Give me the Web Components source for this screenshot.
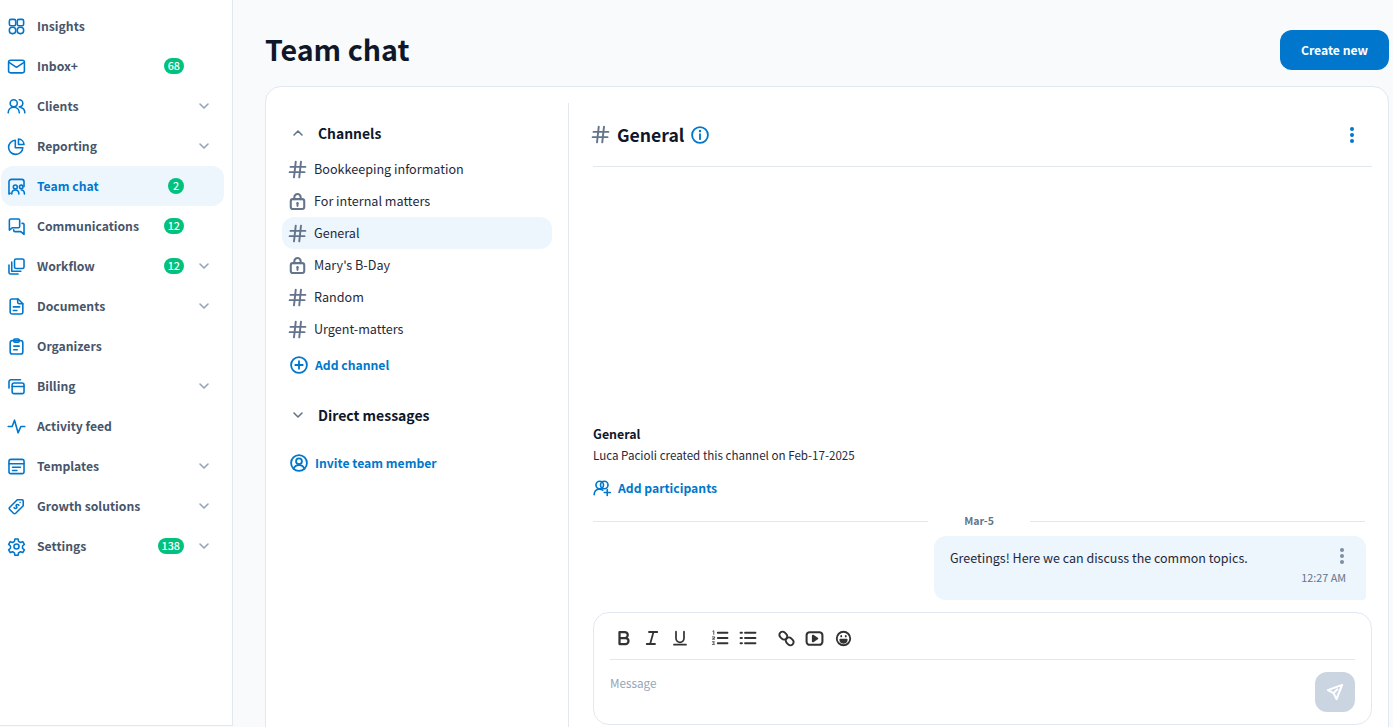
<!DOCTYPE html>
<html lang="en">
<head>
<meta charset="utf-8">
<title>Team chat</title>
<style>
  html, body { margin: 0; height: 100%; overflow: hidden; }
  body { font-family: "Noto Sans CJK SC", "Noto Sans", sans-serif; color: #0f172a; }
</style>
</head>
<body>
<app-shell></app-shell>
<script>
// stroke icons, 24 box unless the caller gives another one
const ICONS = {
  insights: '<rect x="3" y="3" width="8" height="8" rx="2"/><rect x="13" y="3" width="8" height="8" rx="2"/><rect x="3" y="13" width="8" height="8" rx="3.5"/><rect x="13" y="13" width="8" height="8" rx="3.5"/>',
  inbox: '<rect x="2" y="4" width="20" height="16" rx="2.5"/><path d="M3 7l9 6 9-6"/>',
  clients: '<circle cx="8.500" cy="8" r="4.500"/><path d="M1.500 20c0-4 3-7 7-7s7 3 7 7"/><path d="M15.500 3.500a4.500 4.500 0 0 1 0 9M18 13.500c2.800.8 4.500 3.300 4.500 6.500"/>',
  reporting: '<path d="M10.500 4a9 9 0 1 0 9.500 9.500h-9.500z"/><path d="M14.500 2.500a7.500 7.500 0 0 1 7 7h-7z"/>',
  teamchat: '<path d="M4 20.500l-1.500 1V6a3 3 0 0 1 3-3h13a3 3 0 0 1 3 3v6"/><circle cx="10.500" cy="12.500" r="2.500"/><path d="M6 21.500c0-3 2-5 4.500-5s4.500 2 4.500 5"/><circle cx="18" cy="12.500" r="2.200"/><path d="M18 16.500c2.400 0 4 2 4 5"/>',
  comms: '<path d="M3 4a1.500 1.500 0 0 1 1.500-1.500h10A1.500 1.500 0 0 1 16 4v8a1.500 1.500 0 0 1-1.500 1.500H7L3 16.500z"/><path d="M19 8h1a1.500 1.500 0 0 1 1.500 1.500V22l-4-3.500H10a1.500 1.500 0 0 1-1.500-1.500v-1"/>',
  workflow: '<rect x="9.500" y="2.500" width="12" height="12" rx="2"/><path d="M2.500 10v9.500a2 2 0 0 0 2 2H14"/><path d="M6 6.500v11.500h11.500"/>',
  documents: '<path d="M6 2.500h8l6 6V19a2.500 2.500 0 0 1-2.500 2.500h-11A2.500 2.500 0 0 1 4 19V4.500a2 2 0 0 1 2-2z"/><path d="M13.500 2.500v4a2 2 0 0 0 2 2h4.500M8 12.500h8M8 17h4.500"/>',
  organizers: '<rect x="4" y="4.500" width="16" height="17" rx="3"/><rect x="8.500" y="2.500" width="7" height="4" rx="1.500"/><path d="M8.500 11.500h7M8.500 16h4.500"/>',
  billing: '<rect x="6.500" y="7.500" width="15" height="13.500" rx="2.500"/><path d="M6.500 12h15"/><path d="M2.500 14V6a2.500 2.500 0 0 1 2.500-2.500h12"/>',
  activity: '<path d="M1.500 12h5l3-8 4.500 16 3.500-8h5"/>',
  templates: '<rect x="2.500" y="3" width="19" height="18" rx="2.500"/><path d="M2.500 8.500h19M7 13h10M7 17h5.500"/>',
  growth: '<path d="M13 3.500h6a1.500 1.500 0 0 1 1.500 1.500v6L11 20.500a2 2 0 0 1-2.800 0l-4.700-4.700a2 2 0 0 1 0-2.800z"/><path d="M15 10.500c-1-1.500-3-1-3.500 0s1.500 2 1 3-2.500 1.500-3.500 0M16.500 7h.1"/>',
  settings: '<circle cx="12" cy="12" r="3.200"/><path d="M10 2.500h4l.6 3 2.400 1.400 2.900-1 2 3.500-2.300 2v2.800l2.300 2-2 3.500-2.900-1-2.400 1.400-.6 3h-4l-.6-3L7 18.700l-2.900 1-2-3.500 2.300-2v-2.800l-2.300-2 2-3.500 2.900 1 2.400-1.400z" stroke-linejoin="round"/>',
  chevron: '<path d="M6 9l6 6 6-6"/>',
  chevronUp: '<path d="M6 15l6-6 6 6"/>',
  hash: '<path d="M4 9h17M3 15h17M10 3L8 21M16 3l-2 18"/>',
  lock: '<rect x="3.500" y="9" width="17" height="12.500" rx="2.500"/><path d="M8 9V6.500a4 4 0 0 1 8 0V9"/><circle cx="12" cy="14" r="1.500" fill="currentColor" stroke="none"/><path d="M12 14.500v3"/>',
  plusCircle: '<circle cx="12" cy="12" r="9.500"/><path d="M12 7.500v9M7.500 12h9"/>',
  userCircle: '<circle cx="12" cy="12" r="9.500"/><circle cx="12" cy="10" r="3.500"/><path d="M5.500 19c1-3 3.500-4.500 6.500-4.500s5.500 1.500 6.500 4.500"/>',
  info: '<circle cx="12" cy="12" r="9.500"/><path d="M12 11v6"/><path d="M12 7v.5" stroke-width="2.800"/>',
  addPeople: '<circle cx="9" cy="8" r="5"/><circle cx="15" cy="8" r="5"/><path d="M1.500 21c0-4 2.500-7.500 7-7.500 2 0 3.500.6 4.500 1.500"/><path d="M19 14v8M15 18h8"/>',
  send: '<path d="M21.500 2.500L2.500 9.500l7.500 4 4 8z" stroke-linejoin="round"/><path d="M10 13.500l5-5"/>',
  bold: '<path d="M6 4h7a4 4 0 0 1 0 8H6zM6 12h8a4 4 0 0 1 0 8H6z"/>',
  italic: '<path d="M8 4h11M5 20h11M14 4l-4.500 16"/>',
  underline: '<path d="M6 2.500v10a6 6 0 0 0 12 0v-10M3 22h18"/>',
  ol: '<path d="M9 5h13M9 12h13M9 19h13" stroke-width="2.400"/><path d="M2.500 3l1.200-.8v5M1.800 10.500h3v1.500l-3 1.500h3M1.800 17h3l-1.500 1.500 1.500 2h-3" stroke-width="1.100"/>',
  ul: '<path d="M8 5h14M8 12h14M8 19h14M2 5h2M2 12h2M2 19h2" stroke-width="2.400"/>',
  link: '<rect x="1.500" y="3.500" width="12" height="9" rx="4.500" transform="rotate(45 7.500 8)"/><rect x="10.500" y="11.500" width="12" height="9" rx="4.500" transform="rotate(45 16.500 16)"/>',
  video: '<rect x="2" y="4" width="20" height="16" rx="4"/><path d="M10 8.500l5.500 3.500-5.500 3.500z" fill="currentColor"/>',
  emoji: '<circle cx="12" cy="12" r="9.500"/><path d="M7.500 13.500h9a4.500 4.500 0 0 1-9 0z" fill="currentColor"/><path d="M8.800 8.500v.6M15.200 8.500v.6" stroke-width="2.600"/>'
};

function icon(name, size, sw) {
  return `<svg width="${size}" height="${size}" viewBox="0 0 24 24" fill="none" stroke="currentColor" stroke-width="${sw || 2}" stroke-linecap="round" stroke-linejoin="round" aria-hidden="true">${ICONS[name]}</svg>`;
}

class NavItem extends HTMLElement {
  connectedCallback() {
    const badge = this.getAttribute('badge');
    this.attachShadow({ mode: 'open' });
    this.shadowRoot.innerHTML = `
      <style>
        :host { display: block; margin-left: 1px; width: 223px; }
        .row {
          display: flex;
          align-items: center;
          height: 40px;
          padding: 0 12px 0 6px;
          box-sizing: border-box;
          border-radius: 12px;
          font-size: 12.2px;
          font-weight: 600;
          color: #475569;
        }
        :host([active]) .row { background: #edf5fd; color: #0077cc; }
        .ico { display: flex; width: 19px; color: #0077cc; margin-right: 11px; }
        .label { flex: 1; }
        .badge {
          min-width: 8px;
          height: 16px;
          line-height: 15px;
          padding: 0 4px;
          border-radius: 8px;
          background: #00c27c;
          color: #fff;
          font-size: 10.8px;
          font-weight: 500;
          text-align: center;
        }
        .chev { display: flex; width: 16px; margin-left: 12px; color: #94a3b8; }
      </style>
      <div class="row">
        <span class="ico">${icon(this.getAttribute('icon'), 19, 2)}</span>
        <span class="label"><slot></slot></span>
        ${badge ? `<span class="badge">${badge}</span>` : ''}
        <span class="chev">${this.hasAttribute('chevron') ? icon('chevron', 16, 2.4) : ''}</span>
      </div>`;
  }
}
customElements.define('nav-item', NavItem);

class SideNav extends HTMLElement {
  connectedCallback() {
    this.attachShadow({ mode: 'open' });
    this.shadowRoot.innerHTML = `
      <style>
        :host {
          display: block;
          flex: none;
          width: 233px;
          height: 726px;
          box-sizing: border-box;
          padding-top: 6px;
          background: #fff;
          border-right: 1px solid #e2e8f0;
          border-bottom: 1px solid #e2e8f0;
        }
      </style>
      <nav-item icon="insights">Insights</nav-item>
      <nav-item icon="inbox" badge="68">Inbox+</nav-item>
      <nav-item icon="clients" chevron>Clients</nav-item>
      <nav-item icon="reporting" chevron>Reporting</nav-item>
      <nav-item icon="teamchat" badge="2" active>Team chat</nav-item>
      <nav-item icon="comms" badge="12">Communications</nav-item>
      <nav-item icon="workflow" badge="12" chevron>Workflow</nav-item>
      <nav-item icon="documents" chevron>Documents</nav-item>
      <nav-item icon="organizers">Organizers</nav-item>
      <nav-item icon="billing" chevron>Billing</nav-item>
      <nav-item icon="activity">Activity feed</nav-item>
      <nav-item icon="templates" chevron>Templates</nav-item>
      <nav-item icon="growth" chevron>Growth solutions</nav-item>
      <nav-item icon="settings" badge="138" chevron>Settings</nav-item>`;
  }
}
customElements.define('side-nav', SideNav);

class ChannelItem extends HTMLElement {
  connectedCallback() {
    const isLock = this.hasAttribute('private');
    this.attachShadow({ mode: 'open' });
    this.shadowRoot.innerHTML = `
      <style>
        :host {
          display: flex;
          align-items: center;
          height: 32px;
          padding-left: 5px;
          border-radius: 12px;
          font-size: 12.6px;
          color: #1e293b;
        }
        :host([active]) { background: #edf5fd; }
        .ico { display: flex; justify-content: center; width: 21px; margin-right: 6px; color: #64748b; }
        .txt { padding-bottom: 2px; }
      </style>
      <span class="ico">${isLock ? icon('lock', 19, 2.6) : icon('hash', 21, 2.2)}</span>
      <span class="txt"><slot></slot></span>`;
  }
}
customElements.define('channel-item', ChannelItem);

class LinkAction extends HTMLElement {
  connectedCallback() {
    const size = this.getAttribute('size') || 20;
    this.attachShadow({ mode: 'open' });
    this.shadowRoot.innerHTML = `
      <style>
        :host {
          display: flex;
          align-items: center;
          gap: 6px;
          font-size: 12.2px;
          font-weight: 600;
          color: #0077cc;
          line-height: 20px;
        }
        span { display: flex; }
      </style>
      <span>${icon(this.getAttribute('icon'), size, 2.2)}</span><slot></slot>`;
  }
}
customElements.define('link-action', LinkAction);

class ChannelList extends HTMLElement {
  connectedCallback() {
    this.attachShadow({ mode: 'open' });
    this.shadowRoot.innerHTML = `
      <style>
        :host {
          display: block;
          flex: none;
          width: 303px;
          box-sizing: border-box;
          padding: 15px 16px 0 16px;
          border-right: 1px solid #e2e8f0;
        }
        .head {
          display: flex;
          align-items: center;
          height: 30px;
          padding-left: 8px;
          font-size: 13.9px;
          font-weight: 600;
          color: #0f172a;
        }
        .head span { display: flex; width: 16px; margin-right: 12px; color: #64748b; }
        .dm { font-size: 14px; }
        .add { margin: 10px 0 0 7px; }
        .inv { margin: 23px 0 0 7px; }
        .list { margin-top: 5px; width: 270px; }
        .dmh { margin-top: 25px; }
      </style>
      <div class="head"><span>${icon('chevronUp', 16, 2.4)}</span>Channels</div>
      <div class="list">
        <channel-item>Bookkeeping information</channel-item>
        <channel-item private>For internal matters</channel-item>
        <channel-item active>General</channel-item>
        <channel-item private>Mary's B-Day</channel-item>
        <channel-item>Random</channel-item>
        <channel-item>Urgent-matters</channel-item>
      </div>
      <link-action class="add" icon="plusCircle">Add channel</link-action>
      <div class="head dm dmh"><span>${icon('chevron', 16, 2.4)}</span>Direct messages</div>
      <link-action class="inv" icon="userCircle">Invite team member</link-action>`;
  }
}
customElements.define('channel-list', ChannelList);

class ChatBubble extends HTMLElement {
  connectedCallback() {
    this.attachShadow({ mode: 'open' });
    this.shadowRoot.innerHTML = `
      <style>
        :host {
          display: block;
          position: relative;
          align-self: flex-end;
          width: 432px;
          height: 64px;
          box-sizing: border-box;
          margin-right: 6px;
          padding: 12px 20px 0 16px;
          background: #edf5fd;
          border-radius: 12px 12px 4px 12px;
          font-size: 12.5px;
          line-height: 20px;
          color: #1e293b;
        }
        .time { text-align: right; font-size: 10.8px; line-height: 18px; color: #64748b; }
        .more { position: absolute; top: 12px; right: 22px; display: flex; flex-direction: column; gap: 2px; }
        .more i { width: 4px; height: 4px; border-radius: 50%; background: #7d8ea3; }
      </style>
      <slot></slot>
      <div class="time">${this.getAttribute('time')}</div>
      <div class="more"><i></i><i></i><i></i></div>`;
  }
}
customElements.define('chat-bubble', ChatBubble);

class MessageEditor extends HTMLElement {
  connectedCallback() {
    const tool = (n, s, m, sw) => `<span style="display:flex;margin-left:${m}px">${icon(n, s, sw || 2.6)}</span>`;
    this.attachShadow({ mode: 'open' });
    this.shadowRoot.innerHTML = `
      <style>
        :host {
          display: block;
          flex: none;
          margin-top: 12px;
          height: 113px;
          box-sizing: border-box;
          padding: 0 16px;
          border: 1px solid #e2e8f0;
          border-radius: 16px;
          background: #fff;
        }
        .tools {
          display: flex;
          align-items: center;
          height: 42px;
          padding: 4px 0 0 4px;
          border-bottom: 1px solid #e2e8f0;
          color: #333;
        }
        .body { display: flex; justify-content: space-between; padding-top: 12px; }
        .ph { font-size: 11.7px; line-height: 22px; color: #94a3b8; }
        button {
          width: 40px;
          height: 40px;
          padding: 0;
          border: 0;
          border-radius: 12px;
          background: #cbd5e1;
          color: #fff;
          display: flex;
          align-items: center;
          justify-content: center;
        }
      </style>
      <div class="tools">
        ${tool('bold', 18, 1, 3)}${tool('italic', 18, 10, 2.4)}${tool('underline', 16, 11, 2.6)}
        ${tool('ol', 18, 23)}${tool('ul', 18, 10)}
        ${tool('link', 17, 21, 2.8)}${tool('video', 19, 10)}${tool('emoji', 17, 11)}
      </div>
      <div class="body">
        <span class="ph">Message</span>
        <button aria-label="Send">${icon('send', 18, 2.8)}</button>
      </div>`;
  }
}
customElements.define('message-editor', MessageEditor);

class ChatPane extends HTMLElement {
  connectedCallback() {
    this.attachShadow({ mode: 'open' });
    this.shadowRoot.innerHTML = `
      <style>
        :host {
          display: flex;
          flex-direction: column;
          flex: 1;
          min-width: 0;
          padding: 0 16px 20px 24px;
        }
        header {
          flex: none;
          display: flex;
          align-items: center;
          height: 63px;
          border-bottom: 1px solid #e2e8f0;
          font-size: 17.6px;
          font-weight: 600;
          color: #0f172a;
        }
        .hash { display: flex; color: #64748b; margin: 0 6px 0 -3px; }
        .info { display: flex; color: #0077cc; margin-left: 6px; }
        .kebab { margin-left: auto; margin-right: 18px; display: flex; flex-direction: column; gap: 2px; }
        .kebab i { width: 4px; height: 4px; border-radius: 50%; background: #0077cc; }
        .feed { flex: 1; display: flex; flex-direction: column; justify-content: flex-end; }
        .title { font-size: 12.4px; font-weight: 700; line-height: 20px; color: #0f172a; }
        .sub { font-size: 11.6px; line-height: 20px; margin-top: 1px; color: #1e293b; }
        link-action { margin: 13px 0 0 0; gap: 7px; }
        .date {
          display: flex;
          align-items: center;
          margin: 13px 7px 5px 0;
          font-size: 10.6px;
          font-weight: 600;
          line-height: 20px;
          color: #64748b;
        }
        .date::before, .date::after { content: ""; flex: 1; height: 1px; background: #e2e8f0; }
        .date span { padding: 0 36px; }
      </style>
      <header>
        <span class="hash">${icon('hash', 21, 2.2)}</span>General
        <span class="info">${icon('info', 20, 2.2)}</span>
        <span class="kebab"><i></i><i></i><i></i></span>
      </header>
      <div class="feed">
        <div class="title">General</div>
        <div class="sub">Luca Pacioli created this channel on Feb-17-2025</div>
        <link-action icon="addPeople" size="18">Add participants</link-action>
        <div class="date"><span>Mar-5</span></div>
        <chat-bubble time="12:27 AM">Greetings! Here we can discuss the common topics.</chat-bubble>
      </div>
      <message-editor></message-editor>`;
  }
}
customElements.define('chat-pane', ChatPane);

class AppShell extends HTMLElement {
  connectedCallback() {
    this.attachShadow({ mode: 'open' });
    this.shadowRoot.innerHTML = `
      <style>
        :host { display: flex; height: 727px; overflow: hidden; background: #f8fafc; }
        main { flex: 1; min-width: 0; padding: 0 4px 0 32px; }
        .top { display: flex; align-items: center; justify-content: space-between; height: 86px; padding-top: 14px; box-sizing: border-box; }
        h1 { margin: -2px 0 0; font-size: 28.6px; font-weight: 700; line-height: 40px; color: #0f172a; }
        .cta {
          width: 109px;
          height: 40px;
          padding: 0;
          border: 0;
          border-radius: 12px;
          background: #0077cc;
          color: #fff;
          font: 600 12.2px "Noto Sans CJK SC", "Noto Sans", sans-serif;
        }
        .card {
          display: flex;
          height: 660px;
          box-sizing: border-box;
          padding-top: 16px;
          background: #fff;
          border: 1px solid #e2e8f0;
          border-radius: 16px;
        }
      </style>
      <side-nav></side-nav>
      <main>
        <div class="top"><h1>Team chat</h1><button class="cta">Create new</button></div>
        <div class="card">
          <channel-list></channel-list>
          <chat-pane></chat-pane>
        </div>
      </main>`;
  }
}
customElements.define('app-shell', AppShell);
</script>
</body>
</html>
